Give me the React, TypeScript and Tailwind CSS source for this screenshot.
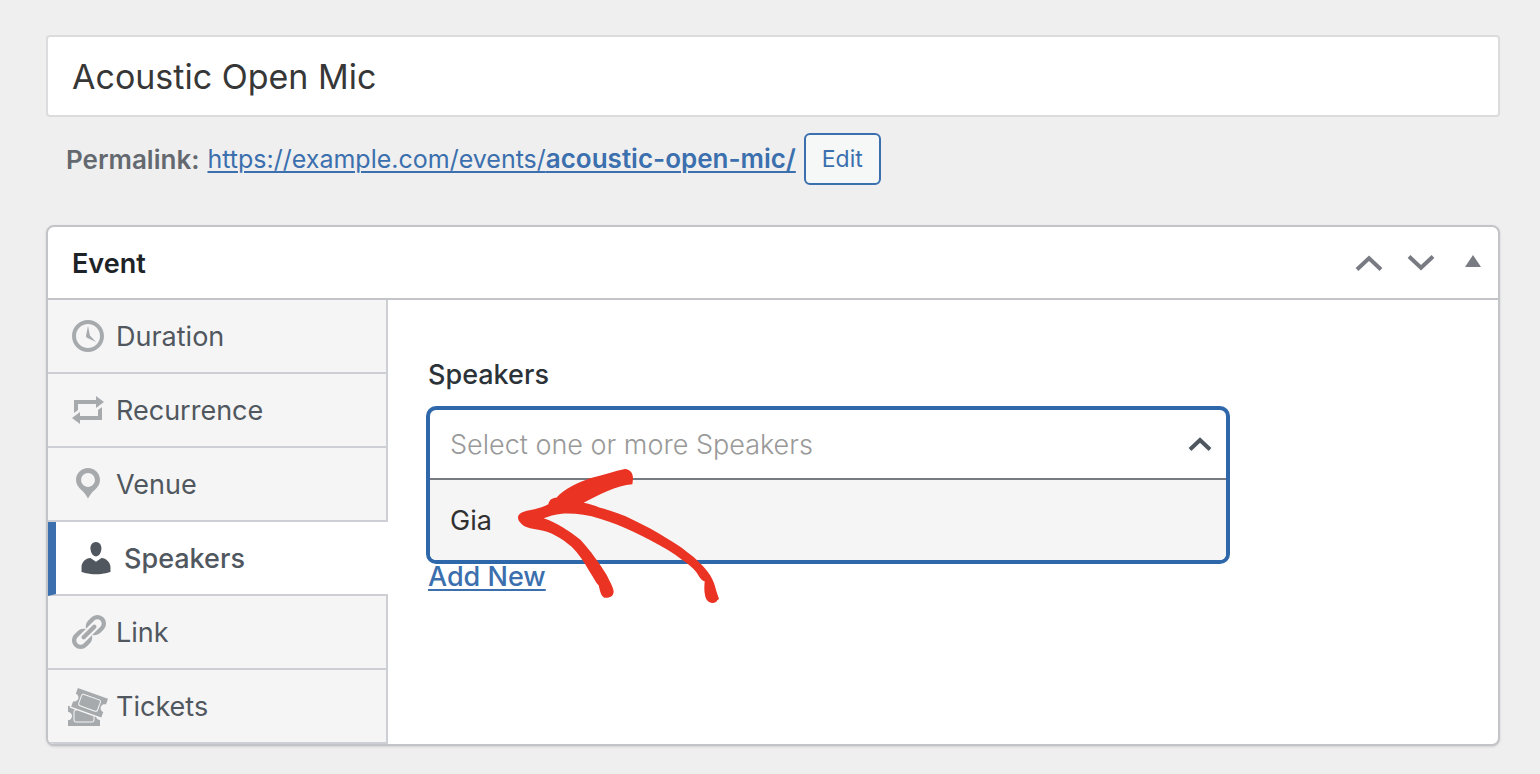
import React from 'react';

type Tab = {
  label: string;
  path: string;
  active?: boolean;
};

const tabs: Tab[] = [
  {
    label: 'Duration',
    path: 'M10 2c4.42 0 8 3.58 8 8s-3.58 8-8 8-8-3.58-8-8 3.58-8 8-8zm0 14c3.31 0 6-2.69 6-6s-2.69-6-6-6-6 2.69-6 6 2.69 6 6 6zm-.71-5.29c.07.05.14.1.23.15l-.02.02L14 13l-3.03-3.19L10 5l-.97 4.81h.01c0 .02-.01.05-.02.09S9 9.97 9 10c0 .28.1.52.29.71z',
  },
  {
    label: 'Recurrence',
    path: 'M5 7v3l-2 1.5V5h11V3l4 3.01L14 9V7H5zm10 6v-3l2-1.5V15H6v2l-4-3.01L6 11v2h9z',
  },
  {
    label: 'Venue',
    path: 'M10 2C6.69 2 4 4.69 4 8c0 2.02 1.17 3.71 2.53 4.89.43.37 1.18.96 1.85 1.83.74.97 1.41 2.01 1.62 2.71.21-.7.88-1.74 1.62-2.71.67-.87 1.42-1.46 1.85-1.83C14.83 11.71 16 10.02 16 8c0-3.31-2.69-6-6-6zm0 2.56c1.9 0 3.44 1.54 3.44 3.44S11.9 11.44 10 11.44 6.56 9.9 6.56 8 8.1 4.56 10 4.56z',
  },
  {
    label: 'Speakers',
    active: true,
    path: 'M10 9.25c-2.27 0-2.73-3.44-2.73-3.44C7 4.02 7.82 2 9.97 2c2.16 0 2.98 2.02 2.71 3.81 0 0-.41 3.44-2.68 3.44zm0 2.57L12.72 10c2.39 0 4.52 2.33 4.52 4.53v2.49s-3.65 1.13-7.24 1.13c-3.65 0-7.24-1.13-7.24-1.13v-2.49c0-2.25 1.94-4.48 4.47-4.48z',
  },
  {
    label: 'Link',
    path: 'M17.74 2.76c1.68 1.69 1.68 4.41 0 6.1l-1.53 1.52c-1.12 1.12-2.7 1.47-4.14 1.09l2.62-2.61.76-.77.76-.76c.84-.84.84-2.2 0-3.04-.84-.85-2.2-.85-3.04 0l-.77.76-3.38 3.38c-.37-1.44-.02-3.02 1.1-4.14l1.52-1.53c1.69-1.68 4.42-1.68 6.1 0zM8.59 13.43l5.34-5.34c.42-.42.42-1.1 0-1.52-.44-.43-1.13-.39-1.53 0l-5.33 5.34c-.42.42-.42 1.1 0 1.52.44.43 1.13.39 1.52 0zm-.76 2.29l4.14-4.15c.38 1.44.03 3.02-1.09 4.14l-1.52 1.53c-1.69 1.68-4.41 1.68-6.1 0-1.68-1.68-1.68-4.42 0-6.1l1.53-1.52c1.12-1.12 2.7-1.47 4.14-1.1l-4.14 4.15c-.85.84-.85 2.2 0 3.05.84.84 2.2.84 3.04 0z',
  },
  {
    label: 'Tickets',
    path: 'M20 6.38L18.99 9.2v-.01c-.52-.19-1.03-.16-1.53.08s-.85.62-1.04 1.14-.16 1.03.07 1.53c.24.5.62.84 1.15 1.03v.01l-1.01 2.82-15.06-5.38.99-2.79c.52.19 1.03.16 1.53-.08.5-.23.84-.61 1.03-1.13s.16-1.03-.08-1.53c-.23-.49-.61-.83-1.13-1.02L4.93 1zm-4.97 5.69l1.37-3.76c.12-.31.1-.65-.04-.95s-.39-.53-.7-.65L8.14 3.98c-.64-.23-1.37.12-1.6.74L5.17 8.48c-.24.65.1 1.37.74 1.6l7.52 2.74c.14.05.28.08.43.08.52 0 1-.33 1.17-.83zM7.97 4.45l7.51 2.73c.19.07.34.21.43.39.08.18.09.38.02.57l-1.37 3.76c-.13.38-.58.59-.96.45L6.09 9.61c-.39-.14-.59-.57-.45-.96l1.37-3.76c.1-.29.39-.49.7-.49.09 0 .17.02.26.05zm6.82 12.14c.35.27.75.41 1.2.41H16v3H0v-2.96c.55 0 1.03-.2 1.41-.59.39-.38.59-.86.59-1.41s-.2-1.02-.59-1.41-.86-.59-1.41-.59V10h1.05l-.28.8 2.87 1.02c-.51.16-.89.62-.89 1.18v4c0 .69.56 1.25 1.25 1.25h8c.69 0 1.25-.56 1.25-1.25v-1.75l.83.3c.12.43.36.78.71 1.04zM3.25 17v-4c0-.41.34-.75.75-.75h.83l7.92 2.83V17c0 .41-.34.75-.75.75H4c-.41 0-.75-.34-.75-.75z',
  },
];

const HandDrawnArrow: React.FC = () => (
  <svg
    viewBox="15 18 618 417"
    className="pointer-events-none absolute left-[89px] top-[60px] z-10 h-[139px] w-[206px] text-[#ea3323]"
    aria-hidden="true"
  >
    <path
      fill="currentColor"
      d="M24 172C24 158 45 152 66 149C88 145 104 139 115 133C118 119 126 113 139 113C165 85 205 68 240 55C280 45 315 33 345 27C362 28 370 42 369 58L367 73C320 77 265 105 221 128C240 131 256 137 270 143C305 152 338 164 370 180C404 196 438 214 470 235C492 248 512 260 530 275C545 286 559 297 570 310C582 321 592 333 600 345C610 362 615 376 618 390L627 417C622 420 620 424 618 426C602 434 588 424 585 405C582 392 583 378 584 364C570 359 566 345 558 335C548 322 535 312 520 302C504 290 488 279 470 268C436 248 403 231 370 215C337 199 304 186 270 176C230 163 190 159 155 161C135 163 115 169 101 175C140 187 180 215 212 240C240 270 270 312 290 345C300 365 311 385 311 395C310 410 298 414 283 413C272 408 270 392 266 376C255 365 252 355 240 337C222 305 205 280 185 260C155 235 125 215 85 209C62 206 42 202 32 189C26 184 24 178 24 172Z"
    />
  </svg>
);

const MetaboxHeader: React.FC = () => (
  <header className="flex h-[73px] items-center border-b-2 border-[#c3c4c7] pl-6 pr-[13px]">
    <h2 className="flex-1 pt-[2px] text-[27px] leading-8 font-semibold text-[#1d2327]">Event</h2>
    <div className="flex items-center text-[#787c82]">
      <button type="button" aria-label="Move up" className="flex h-10 w-[52px] items-center justify-center">
        <svg viewBox="0 0 28 16" className="h-4 w-7" fill="none" stroke="currentColor" strokeWidth="4">
          <path d="M2 14.5L14 3.2L26 14.5" />
        </svg>
      </button>
      <button type="button" aria-label="Move down" className="flex h-10 w-[52px] items-center justify-center">
        <svg viewBox="0 0 28 16" className="h-4 w-7" fill="none" stroke="currentColor" strokeWidth="4">
          <path d="M2 1.5L14 12.8L26 1.5" />
        </svg>
      </button>
      <button type="button" aria-label="Toggle panel: Event" className="ml-[14px] flex h-10 w-6 items-center justify-center">
        <svg viewBox="0 0 16 16" className="h-4 w-4" fill="currentColor">
          <path d="M8 0L16 12H0z" />
        </svg>
      </button>
    </div>
  </header>
);

const TabList: React.FC = () => (
  <nav className="w-[340px] shrink-0">
    <ul>
      {tabs.map((tab) => (
        <li key={tab.label}>
          <a
            href={`#${tab.label.toLowerCase()}`}
            className={
              tab.active
                ? 'flex h-[74px] items-center gap-2 border-b-2 border-l-8 border-b-[#cdcfd4] border-l-[#3b6fae] bg-white pl-5 text-[27px] leading-8 font-medium text-[#50575e]'
                : 'flex h-[74px] items-center gap-2 border-b-2 border-r-2 border-[#cdcfd4] bg-[#f5f5f5] pl-5 text-[27px] leading-8 text-[#50575e]'
            }
          >
            <svg
              viewBox="0 0 20 20"
              className={tab.active ? 'h-10 w-10 text-[#50575e]' : 'h-10 w-10 text-[#a7aaad]'}
              fill="currentColor"
              aria-hidden="true"
            >
              <path d={tab.path} />
            </svg>
            <span className="pt-[2px]">{tab.label}</span>
          </a>
        </li>
      ))}
    </ul>
  </nav>
);

const SpeakersPanel: React.FC = () => (
  <section className="min-w-0 flex-1 pb-10 pl-[38px] pr-10 pt-[58px]">
    <label htmlFor="speakers" className="ml-[2px] block text-[27px] leading-[34px] font-medium text-[#2c3338]">
      Speakers
    </label>
    <div className="relative mt-[14px] w-full max-w-[804px]">
      <div className="overflow-hidden rounded-[10px] border-4 border-[#2f68aa] bg-white">
        <div className="flex h-[70px] items-center border-b-2 border-[#787c82] pl-5 pr-[14px]">
          <input
            id="speakers"
            type="text"
            role="combobox"
            aria-expanded="true"
            aria-controls="speakers-options"
            placeholder="Select one or more Speakers"
            className="h-[34px] min-w-0 flex-1 bg-transparent text-[27px] leading-8 font-light outline-none placeholder:text-[#999999]"
          />
          <svg viewBox="0 0 24 14" className="h-[14px] w-6 text-[#50575e]" fill="none" stroke="currentColor" strokeWidth="4">
            <path d="M2 12.5L12 3L22 12.5" />
          </svg>
        </div>
        <ul id="speakers-options" role="listbox" aria-label="Speakers">
          <li role="option" aria-selected="false" className="flex h-20 items-center bg-[#f5f5f5] pl-5 pt-[2px] text-[27px] leading-8 text-[#303030]">
            Gia
          </li>
        </ul>
      </div>
      <HandDrawnArrow />
    </div>
    <a
      href="#add-new"
      className="ml-[2px] block w-fit text-[27px] leading-[26px] font-medium text-[#3b6fae] underline decoration-2 underline-offset-[3px]"
    >
      Add New
    </a>
  </section>
);

const App: React.FC = () => {
  return (
    <div className="min-h-screen bg-[#efefef] pb-7 pl-[46px] pr-10 pt-[35px] font-['Inter',sans-serif]">
      <input
        type="text"
        aria-label="Event title"
        defaultValue="Acoustic Open Mic"
        className="block h-[82px] w-full rounded-[4px] border-2 border-[#dcdcde] bg-white px-6 text-[34px] text-[#373737] outline-none"
      />

      <div className="mt-4 flex h-[52px] items-center pl-5 text-[25px]">
        <strong className="text-[26px] font-semibold text-[#646970]">Permalink:</strong>
        <a href="#permalink" className="ml-2 text-[#3b6fae] underline decoration-2 underline-offset-[3px]">
          https://example.com/events/<span className="text-[26px] font-semibold">acoustic-open-mic/</span>
        </a>
        <button
          type="button"
          className="ml-2 h-[52px] rounded-[6px] border-2 border-[#3b6fae] bg-[#f6f7f7] px-4 text-[23px] text-[#3b6fae]"
        >
          Edit
        </button>
      </div>

      <main className="mt-10 overflow-hidden rounded-[8px] border-2 border-[#c3c4c7] bg-white shadow-sm">
        <MetaboxHeader />
        <div className="flex">
          <TabList />
          <SpeakersPanel />
        </div>
      </main>
    </div>
  );
};

export default App;
